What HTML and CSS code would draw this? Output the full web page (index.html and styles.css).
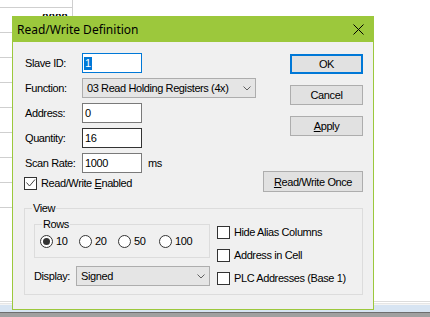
FILE: index.html
```html
<!DOCTYPE html>
<html>
<head>
<meta charset="utf-8">
<link rel="stylesheet" href="styles.css">
</head>
<body>
<div class="page">
  <div class="sheet">
    <div class="srow first"></div>
    <div class="srow"><span class="val"><span class="valtext">0000</span></span></div>
    <div class="srow"></div>
    <div class="srow"></div>
    <div class="srow"></div>
    <div class="srow"></div>
    <div class="srow"></div>
    <div class="srow"></div>
    <div class="srow"></div>
  </div>
  <div class="fill"></div>
  <div class="strip s1"></div>
  <div class="strip s2"></div>
  <div class="strip s3"></div>
  <div class="strip s4"></div>
  <div class="strip s5"></div>
  <div class="strip s6"></div>
  <div class="strip s7"></div>
</div>

<div class="dialog">
  <div class="titlebar">
    <span class="title">Read/Write Definition</span>
    <svg class="close" width="11" height="11" viewBox="0 0 11 11"><path d="M0.5 0.5L10.5 10.5M10.5 0.5L0.5 10.5" stroke="#000" stroke-width="1" fill="none"/></svg>
  </div>
  <div class="body">
    <div class="top">
      <div class="form">
        <span class="lbl">Slave ID:</span>
        <div class="input focus"><span class="sel">1</span></div>
        <span class="lbl">Function:</span>
        <div class="combo func"><span>03 Read Holding Registers (4x)</span><svg width="8" height="5" viewBox="0 0 8 5"><path d="M0.5 0.5L4 4L7.5 0.5" fill="none" stroke="#606060"/></svg></div>
        <span class="lbl">Address:</span>
        <div class="input">0</div>
        <span class="lbl">Quantity:</span>
        <div class="input dark">16</div>
        <span class="lbl">Scan Rate:</span>
        <div class="inrow"><div class="input">1000</div><span class="unit">ms</span></div>
        <div class="cb enabled"><span class="box"><svg width="11" height="11" viewBox="0 0 11 11"><path d="M1.5 4.5L4.5 8L10 1.5" fill="none" stroke="#444" stroke-width="1"/></svg></span><span>Read/Write <u>E</u>nabled</span></div>
      </div>
      <div class="buttons">
        <div class="btn default">OK</div>
        <div class="btn">Cancel</div>
        <div class="btn"><span><u>A</u>pply</span></div>
        <div class="btn once"><span><u>R</u>ead/Write Once</span></div>
      </div>
    </div>
    <fieldset class="group view">
      <legend>View</legend>
      <div class="viewgrid">
        <div class="leftcol">
          <fieldset class="group rows">
            <legend>Rows</legend>
            <div class="radios">
              <div class="ri"><span class="rb on"></span><span>10</span></div>
              <div class="ri"><span class="rb"></span><span>20</span></div>
              <div class="ri"><span class="rb"></span><span>50</span></div>
              <div class="ri"><span class="rb"></span><span>100</span></div>
            </div>
          </fieldset>
          <div class="display">
            <span class="dlbl">Display:</span>
            <div class="combo disp"><span>Signed</span><svg width="8" height="5" viewBox="0 0 8 5"><path d="M0.5 0.5L4 4L7.5 0.5" fill="none" stroke="#606060"/></svg></div>
          </div>
        </div>
        <div class="checks">
          <div class="cb"><span class="box"></span><span>Hide Alias Columns</span></div>
          <div class="cb"><span class="box"></span><span>Address in Cell</span></div>
          <div class="cb"><span class="box"></span><span>PLC Addresses (Base 1)</span></div>
        </div>
      </div>
    </fieldset>
  </div>
</div>
</body>
</html>
```

FILE: styles.css
```css
* { box-sizing: border-box; }
html, body { margin: 0; padding: 0; }
body {
  width: 430px;
  height: 317px;
  overflow: hidden;
  background: #fff;
  font-family: "Liberation Sans", Arial, sans-serif;
  font-size: 11px;
  letter-spacing: -0.4px;
  color: #000;
  position: relative;
}

/* background sheet */
.page { height: 317px; display: flex; flex-direction: column; }
.sheet { width: 73px; display: flex; flex-direction: column; }
.srow {
  height: 25px;
  border-bottom: 1px solid #cfcfcf;
  border-right: 1px solid #cfcfcf;
  display: flex;
  justify-content: flex-end;
  align-items: flex-start;
}
.srow.first { height: 8px; }
.val {
  display: block;
  height: 3px;
  overflow: hidden;
  margin: 6px 4px 0 0;
}
.valtext {
  display: block;
  font-weight: bold;
  line-height: 13px;
  letter-spacing: 0.3px;
  margin-top: -3px;
}
.fill { flex: 1; }
.strip { flex: none; }
.s1 { height: 1px; background: #dcdcdc; }
.s2 { height: 1px; background: #ffffff; }
.s3 { height: 1px; background: #e6e6e6; }
.s4 { height: 1px; background: #f4f4f4; }
.s5 { height: 7px; background: #d7e4f2; }
.s6 { height: 1px; background: #6e6e6e; }
.s7 { height: 4px; background: #a0a0a0; }

/* dialog */
.dialog {
  position: absolute;
  left: 12px;
  top: 16px;
  width: 362px;
  height: 294px;
  border: 1px solid #9cc83c;
  background: #f0f0f0;
  display: flex;
  flex-direction: column;
}
.titlebar {
  height: 25px;
  flex: none;
  background: #9cc83c;
  display: flex;
  align-items: center;
  justify-content: space-between;
  padding: 0 9px 0 4px;
  font-family: "Noto Sans", sans-serif;
  font-size: 12px;
  letter-spacing: 0;
}
.close { display: block; }
.body { padding: 11px 10px 0 11px; }

.top { display: flex; justify-content: space-between; align-items: flex-start; }
.form {
  display: grid;
  grid-template-columns: 58px auto;
  row-gap: 5px;
  align-items: center;
}
.lbl { padding-left: 1px; line-height: 13px; }
.input {
  width: 60px;
  height: 20px;
  border: 1px solid #7a7a7a;
  background: #fff;
  padding-left: 2px;
  line-height: 18px;
}
.input.focus { border-color: #0078d7; display: flex; align-items: center; padding-left: 1px; }
.input.dark { border-color: #333; }
.sel { background: #0078d7; color: #fff; line-height: 13px; padding: 0 1px; }
.inrow { display: flex; align-items: center; gap: 6px; }
.combo {
  height: 20px;
  border: 1px solid #adadad;
  background: #e5e5e5;
  display: flex;
  align-items: center;
  justify-content: space-between;
  padding: 0 4px 0 4px;
}
.combo svg { display: block; }
.func { width: 174px; }

.cb { display: flex; align-items: center; gap: 4px; line-height: 13px; }
.cb.enabled { grid-column: 1 / 3; margin-top: -1px; }
.box {
  width: 13px;
  height: 13px;
  flex: none;
  border: 1px solid #333;
  background: #fff;
}
.box svg { display: block; }

.buttons {
  display: flex;
  flex-direction: column;
  align-items: flex-end;
  gap: 11px;
  padding-top: 1px;
}
.btn {
  width: 73px;
  height: 20px;
  border: 1px solid #adadad;
  background: #e1e1e1;
  display: flex;
  align-items: center;
  justify-content: center;
}
.btn.default { border: 2px solid #0078d7; }
.btn.once { width: 100px; height: 21px; margin-top: 24px; }

/* groups */
.group {
  border: 1px solid #dcdcdc;
  margin: 0;
  min-width: 0;
}
.group legend { line-height: 13px; padding: 0 1px; }
.view { margin-top: 10px; padding: 3px 10px 8px 9px; }
.view legend { margin-left: -2px; }
.viewgrid { display: grid; grid-template-columns: 176px 1fr; column-gap: 7px; }
.rows { padding: 4px 0 9px 5px; }
.rows legend { margin-left: 2px; }
.radios { display: flex; height: 13px; }
.ri { display: flex; align-items: center; gap: 3px; width: 39px; line-height: 13px; }
.ri:nth-child(3) { width: 41px; }
.rb {
  width: 13px;
  height: 13px;
  flex: none;
  border: 1px solid #333;
  border-radius: 50%;
  background: #fff;
  display: flex;
  align-items: center;
  justify-content: center;
}
.rb.on::after {
  content: "";
  width: 7px;
  height: 7px;
  border-radius: 50%;
  background: #333;
}
.display { display: flex; align-items: center; margin-top: 8px; }
.dlbl { width: 42px; }
.disp { width: 134px; }
.checks { display: flex; flex-direction: column; gap: 10px; margin-top: 8px; }
```
